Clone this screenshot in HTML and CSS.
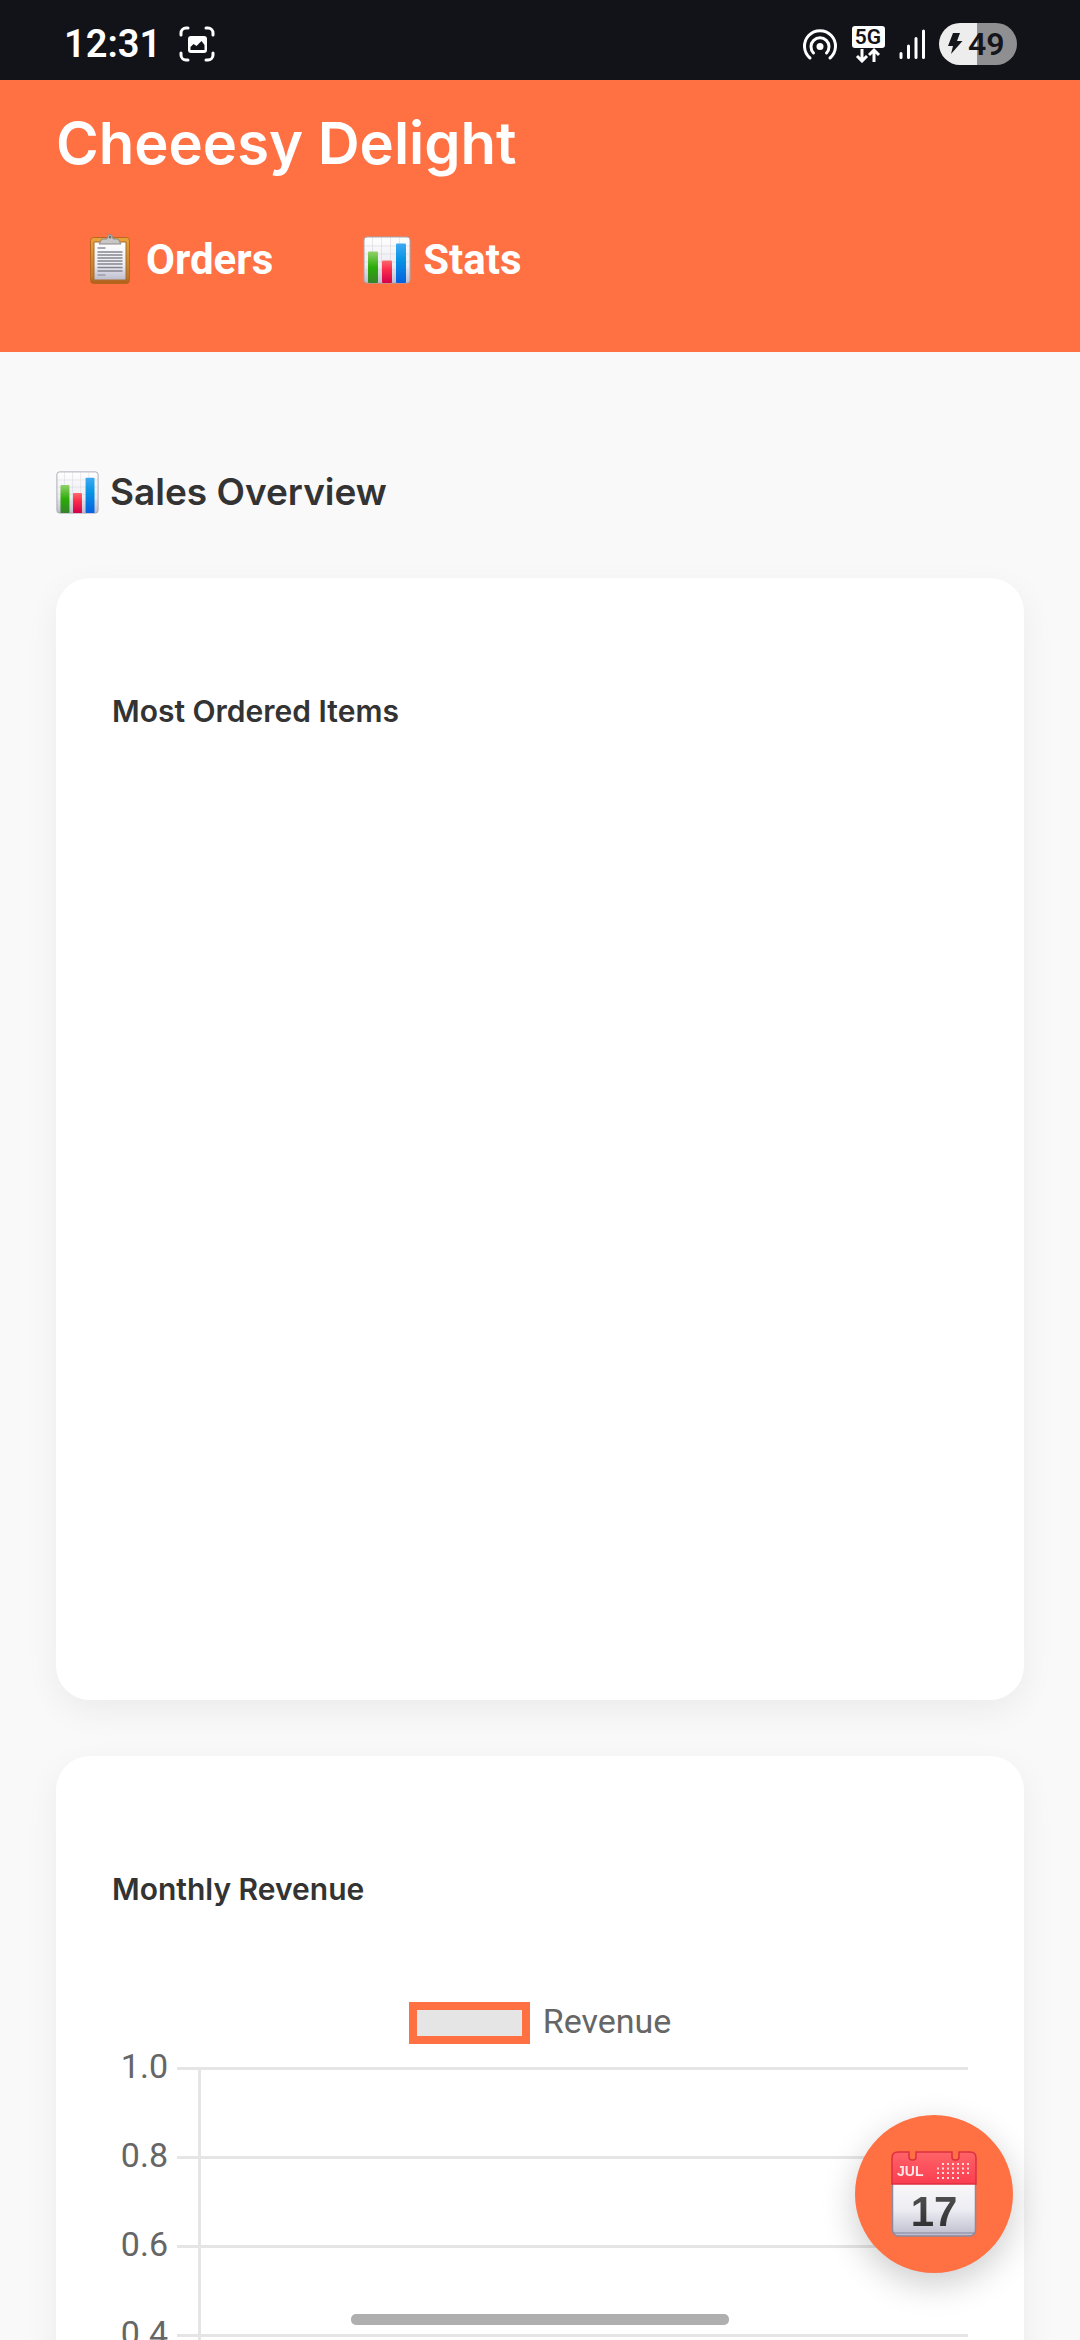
FILE: index.html
```html
<!DOCTYPE html>
<html lang="en">
<head>
<meta charset="utf-8">
<meta name="viewport" content="width=device-width, initial-scale=1">
<title>Cheeesy Delight</title>
<link rel="stylesheet" href="styles.css">
</head>
<body>
<svg class="defs" aria-hidden="true">
  <defs>
    <linearGradient id="paper" x1="0" y1="0" x2="0" y2="1"><stop offset="0" stop-color="#fff"/><stop offset=".6" stop-color="#ececf2"/><stop offset="1" stop-color="#bdbccd"/></linearGradient>
    <linearGradient id="green" x1="0" y1="0" x2="0" y2="1"><stop offset="0" stop-color="#93d16c"/><stop offset=".5" stop-color="#2bac08"/><stop offset="1" stop-color="#37832a"/></linearGradient>
    <linearGradient id="red" x1="0" y1="0" x2="0" y2="1"><stop offset="0" stop-color="#fb6a6c"/><stop offset=".4" stop-color="#fb2c4b"/><stop offset="1" stop-color="#d4004b"/></linearGradient>
    <linearGradient id="blue" x1="0" y1="0" x2="0" y2="1"><stop offset="0" stop-color="#3fa9f2"/><stop offset=".4" stop-color="#0795e4"/><stop offset="1" stop-color="#0560e0"/></linearGradient>
    <linearGradient id="wood" x1="0" y1="0" x2="0" y2="1"><stop offset="0" stop-color="#e9a33c"/><stop offset=".85" stop-color="#c0782c"/><stop offset="1" stop-color="#b35c18"/></linearGradient>
    <linearGradient id="top" x1="0" y1="0" x2="0" y2="1"><stop offset="0" stop-color="#ff6468"/><stop offset="1" stop-color="#fb3d51"/></linearGradient>
    <linearGradient id="ink" x1="0" y1="0" x2="0" y2="1"><stop offset="0" stop-color="#555"/><stop offset="1" stop-color="#2b2b2b"/></linearGradient>
    <symbol id="bars" viewBox="0 0 48 48">
      <rect x="1" y="1" width="46" height="46" rx="3" fill="url(#paper)" stroke="#a5a4b0" stroke-width="1"/>
      <path d="M9.500 1v46M18.500 1v46M27.500 1v46M36.500 1v46M1 10h46M1 18h46M1 26h46M1 34h46" stroke="#c9c9d3" stroke-opacity=".4" stroke-width="1"/>
      <rect x="5" y="15.500" width="10" height="31.500" rx="1" fill="url(#green)"/>
      <rect x="19" y="24.500" width="10" height="22.500" rx="1" fill="url(#red)"/>
      <rect x="33" y="7.500" width="10" height="39.500" rx="1" fill="url(#blue)"/>
    </symbol>
  </defs>
</svg>

<div class="app">
  <div class="status">
    <span class="clock">12:31</span>
    <svg width="36" height="36" viewBox="0 0 36 36" aria-hidden="true">
      <path d="M2 9V7a5 5 0 0 1 5-5h2M27 2h2a5 5 0 0 1 5 5v2M34 27v2a5 5 0 0 1-5 5h-2M9 34H7a5 5 0 0 1-5-5v-2" fill="none" stroke="#fff" stroke-width="3" stroke-linecap="round"/>
      <rect x="9" y="10" width="19" height="17" rx="3" fill="#fff"/>
      <path d="M11.500 24v-3l3-3 3 2 5-5 3 4v5z" fill="#121318"/>
    </svg>
    <div class="status-end">
      <svg width="36" height="34" viewBox="0 0 36 34" aria-hidden="true">
        <g fill="none" stroke="#fff" stroke-width="3" stroke-linecap="round"><path d="M8 31A15.500 15.500 0 1 1 28 31"/><path d="M11.500 26A9 9 0 1 1 24.500 26"/></g><circle cx="18" cy="19.500" r="3.500" fill="#fff"/>
      </svg>
      <svg width="34" height="38" viewBox="0 0 34 38" aria-hidden="true">
        <rect x="1" y="1" width="33" height="22" rx="3" fill="#fff"/>
        <text class="net" x="17" y="19" text-anchor="middle">5G</text>
        <path d="M11 24v12M6 31l5 5 5-5M23 37V25M18 30l5-5 5 5" fill="none" stroke="#fff" stroke-width="3"/>
      </svg>
      <svg width="28" height="30" viewBox="0 0 28 30" aria-hidden="true">
        <path d="M3 24.500v4M10.500 17v11.500M18 9.500v19M25.500 2v26.500" stroke="#fff" stroke-width="3" stroke-linecap="round"/>
      </svg>
      <div class="battery">
        <svg width="16" height="22" viewBox="0 0 16 22" aria-hidden="true"><path d="M6 0h7l-3 8h5.500L4 21l2-8H1z" fill="#15161b"/></svg>
        <span>49</span>
      </div>
    </div>
  </div>

  <header class="header">
    <h1>Cheeesy Delight</h1>
    <nav class="nav">
      <a href="#orders">
        <svg width="48" height="52" viewBox="0 0 48 52" aria-hidden="true">
          <rect x="4.500" y="3.500" width="39" height="46" rx="3" fill="url(#wood)" stroke="#b5691e" stroke-width="1"/>
          <path d="M8 8h32v38H8z" fill="url(#paper)" stroke="#a86a2c" stroke-width="1"/>
          <path d="M13 10l3-5h5c0-6 6-6 6 0h5l3 5z" fill="#c9c7c5" stroke="#8d8985" stroke-width="1"/>
          <circle cx="24" cy="3" r="1.500" fill="#77716c"/>
          <path d="M11.500 14h8M11.500 41h8" stroke="#a9a9b1" stroke-width="2"/>
          <path d="M11.500 18h25M11.500 21h25M11.500 24h25M11.500 27h25M11.500 30h25M11.500 33.500h25M11.500 37h25" stroke="#85858f" stroke-width="1.600"/>
        </svg>
        <span>Orders</span>
      </a>
      <a href="#stats">
        <svg width="48" height="48" aria-hidden="true"><use href="#bars"/></svg>
        <span>Stats</span>
      </a>
    </nav>
  </header>

  <main class="content">
    <h2><svg width="43" height="43" aria-hidden="true"><use href="#bars"/></svg><span>Sales Overview</span></h2>
    <section class="card card-items">
      <h3>Most Ordered Items</h3>
    </section>
    <section class="card">
      <h3>Monthly Revenue</h3>
      <div class="legend"><i class="swatch"></i><span>Revenue</span></div>
      <div class="plot">
        <div class="row"><span>1.0</span></div>
        <div class="row"><span>0.8</span></div>
        <div class="row"><span>0.6</span></div>
        <div class="row"><span>0.4</span></div>
        <div class="row"><span>0.2</span></div>
        <div class="row"><span>0</span></div>
      </div>
    </section>
  </main>
</div>

<button class="fab" type="button" aria-label="Pick a date">
  <svg width="86" height="86" viewBox="0 0 86 86" aria-hidden="true">
    <rect x="1.500" y="20" width="83" height="65" rx="6" fill="url(#paper)" stroke="#8f879c" stroke-width="1.500"/>
    <path d="M3 82h80" stroke="#8e8da6" stroke-width="2" stroke-opacity=".6"/>
    <path d="M1 33V7q0-6 6-6h11v5q0 3 3 3h1q3 0 3-3V1h36v5q0 3 3 3h1q3 0 3-3V1h11q6 0 6 6v26z" fill="url(#top)" stroke="#dd2f40" stroke-width="1.500"/>
    <text class="month" x="6" y="25">JUL</text>
    <g stroke="#ffd9dc" stroke-width="2" stroke-dasharray="2 3"><path d="M51 13h29M46 17.500h34M46 22h34M46 27h24"/></g>
    <text class="day" x="43" y="75" text-anchor="middle" fill="url(#ink)">17</text>
  </svg>
</button>
<div class="home-bar"></div>
</body>
</html>
```

FILE: styles.css
```css
* {
  box-sizing: border-box;
}

body {
  margin: 0;
  background: #f9f9f9;
  color: #333;
  font-family: Inter, "Liberation Sans", sans-serif;
}

h1, h2, h3 {
  margin: 0;
  font-weight: 600;
}

svg {
  display: block;
  flex: none;
}

.defs {
  position: absolute;
  width: 0;
  height: 0;
}

.app {
  display: flex;
  flex-direction: column;
  height: 100vh;
  overflow: hidden;
}

/* Status bar */
.status {
  display: flex;
  align-items: center;
  flex: none;
  gap: 18px;
  height: 80px;
  padding: 8px 63px 0 64px;
  background: #121318;
  color: #fff;
  font-family: Roboto, sans-serif;
}

.clock {
  font-size: 38px;
  font-weight: 600;
  line-height: 40px;
}

.status-end {
  display: flex;
  align-items: center;
  gap: 13px;
  margin-left: auto;
}

.net {
  font: 600 21px Roboto, sans-serif;
  fill: #121318;
}

.battery {
  display: flex;
  align-items: center;
  gap: 5px;
  width: 78px;
  height: 42px;
  padding-left: 8px;
  border-radius: 21px;
  background: linear-gradient(90deg, #ededed 49%, #8f8f91 49%);
  color: #15161b;
  font-size: 32px;
  font-weight: 600;
}

/* Header */
.header {
  flex: none;
  height: 272px;
  padding: 28px 56px;
  background: #ff7043;
  color: #fff;
}

.header h1 {
  font-size: 58px;
  line-height: 70px;
}

.nav {
  display: flex;
  gap: 30px;
  margin-top: 44px;
}

.nav a {
  display: flex;
  align-items: center;
  gap: 12px;
  padding: 14px 30px;
  color: inherit;
  font: 700 42px/48px Roboto, sans-serif;
  text-decoration: none;
}

.nav svg {
  margin: -2px 0;
}

/* Page content */
.content {
  flex: 1;
  min-height: 0;
  padding: 112px 56px 56px;
  overflow: hidden;
}

.content h2 {
  display: flex;
  align-items: center;
  gap: 11px;
  margin-bottom: 58px;
  font-size: 37px;
  line-height: 56px;
}

.card {
  margin-bottom: 56px;
  padding: 112px 56px 56px;
  border-radius: 34px;
  background: #fff;
  box-shadow: 0 11px 34px rgba(0, 0, 0, .06);
}

.card-items {
  min-height: 1122px;
}

.card h3 {
  font-size: 30px;
  line-height: 42px;
}

/* Revenue chart */
.legend {
  display: flex;
  justify-content: center;
  gap: 13px;
  margin: 92px 0 7px;
  color: #666;
  font: 34px/38px Roboto, sans-serif;
}

.swatch {
  width: 121px;
  height: 42px;
  border: 8px solid #ff7043;
  background: #e5e5e5;
}

.plot {
  position: relative;
  display: flex;
  flex-direction: column;
  gap: 55px;
  color: #666;
  font: 34px/30px Roboto, sans-serif;
}

.plot::before {
  content: "";
  position: absolute;
  top: 17px;
  bottom: 17px;
  left: 86px;
  width: 3px;
  background: #e5e5e5;
}

.row {
  display: flex;
  gap: 9px;
  height: 34px;
}

.row span {
  width: 56px;
  text-align: right;
}

.row::after {
  content: "";
  flex: 1;
  align-self: center;
  height: 3px;
  background: #e5e5e5;
}

/* Overlays */
.fab {
  position: fixed;
  right: 67px;
  bottom: 67px;
  display: flex;
  align-items: center;
  justify-content: center;
  width: 158px;
  height: 158px;
  padding: 0;
  border: 0;
  border-radius: 50%;
  background: #ff7043;
  box-shadow: 0 11px 34px rgba(0, 0, 0, .2);
}

.month {
  font: 700 14px "Liberation Sans", sans-serif;
  fill: #ffe6e8;
}

.day {
  font: 700 42px "Liberation Sans", sans-serif;
}

.home-bar {
  position: fixed;
  bottom: 15px;
  left: 50%;
  width: 35%;
  height: 11px;
  border-radius: 5px;
  background: #afafaf;
  transform: translateX(-50%);
}
```
